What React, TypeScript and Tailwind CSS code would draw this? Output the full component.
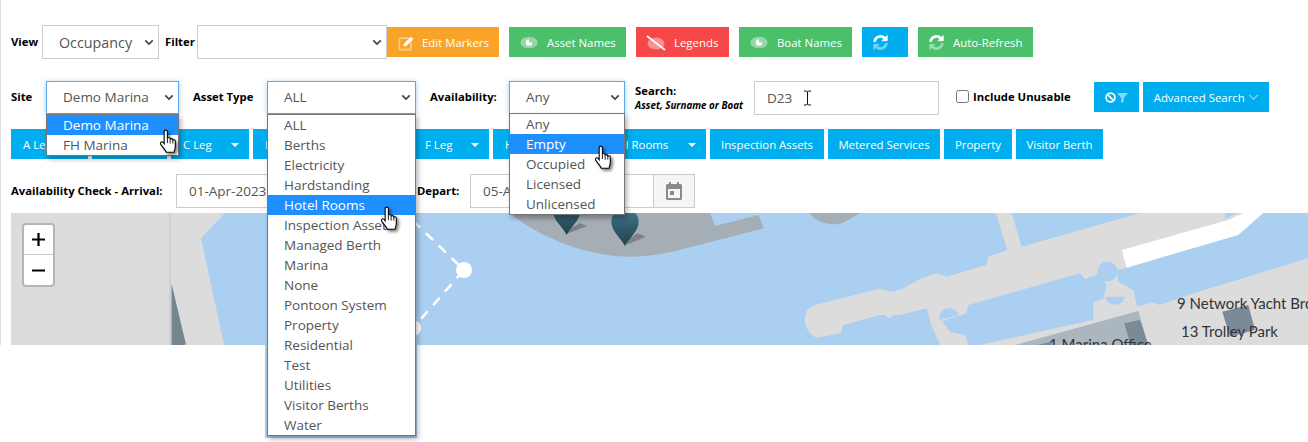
import { ReactNode } from "react";

const FONT = "font-['Open_Sans','Noto_Sans',sans-serif]";

function Chevron() {
  return (
    <svg viewBox="0 0 12 8" className="w-[10px] h-[7px] text-[#444]">
      <path d="M1.5 1.5 6 6l4.5-4.5" fill="none" stroke="currentColor" strokeWidth="2" />
    </svg>
  );
}

function EyeIcon() {
  return (
    <svg viewBox="0 0 20 14" className="w-[18px] h-[13px]">
      <ellipse cx="10" cy="7" rx="9.5" ry="6.5" fill="#fff" opacity="0.4" />
      <path d="M10 3.400a3.600 3.600 0 1 0 3.600 3.600h-2.600a1 1 0 0 1-1-1z" fill="#fff" />
    </svg>
  );
}

function EyeSlashIcon() {
  return (
    <svg viewBox="0 0 20 16" className="w-[20px] h-[16px]">
      <ellipse cx="10" cy="8.5" rx="8.5" ry="6" fill="#fff" opacity="0.4" />
      <path d="M1 1l18 14" stroke="#fff" strokeWidth="1.7" />
    </svg>
  );
}

function EditIcon() {
  return (
    <svg viewBox="0 0 18 17" className="w-[16px] h-[16px]">
      <path d="M12 3H3.500A2 2 0 0 0 1.500 5v9a2 2 0 0 0 2 2h9a2 2 0 0 0 2-2V8" fill="none" stroke="#fff" strokeOpacity="0.45" strokeWidth="2" />
      <path d="M6 12.500l.7-3.400L13.500 2.300a1.400 1.400 0 0 1 2 0l.9.9a1.400 1.400 0 0 1 0 2L9.500 11.800z" fill="#fff" />
    </svg>
  );
}

function SyncIcon() {
  return (
    <svg viewBox="0 0 24 24" className="w-[17px] h-[17px]" fill="none" stroke="#fff" strokeWidth="3.6">
      <path d="M3.500 11a8.500 8.500 0 0 1 14.500-5L21 8.500" />
      <path d="M21.500 2v7.500H14z" fill="#fff" strokeWidth="1" />
      <g opacity="0.45">
        <path d="M20.500 13a8.500 8.500 0 0 1-14.500 5L3 15.500" />
        <path d="M2.500 22v-7.500H10z" fill="#fff" strokeWidth="1" />
      </g>
    </svg>
  );
}

function Hand({ className }: { className: string }) {
  return (
    <svg
      viewBox="0 0 19 24"
      className={`absolute z-30 w-[21px] h-[26px] drop-shadow-[2px_2px_1.5px_rgba(0,0,0,0.5)] ${className}`}
    >
      <path
        d="M5.500 2.500C5.500 1.500 6.200 1 7 1s1.500.5 1.500 1.500V9c0-.8.5-1.200 1.200-1.200S11 8.200 11 9v1c0-.8.500-1.100 1.200-1.100s1.300.4 1.300 1.200v.9c0-.7.500-1 1.100-1s1.200.4 1.200 1.200V16c0 2-.8 3.500-1.300 5.500H7.500C6.500 19.500 4.500 17 2.500 14.500c-.7-.9-.5-2 .3-2.500s1.700 0 2.700 1.500z"
        fill="#fff"
        stroke="#000"
        strokeWidth="1"
      />
      <path d="M8.500 9v4M11 10v3.500M13.500 11v2.500" stroke="#000" strokeWidth="0.8" fill="none" />
    </svg>
  );
}

function Label({ children, className = "" }: { children: ReactNode; className?: string }) {
  return <span className={`text-[11.3px] font-bold text-black whitespace-nowrap ${className}`}>{children}</span>;
}

function SelectBox({ value, active, className }: { value?: string; active?: boolean; className: string }) {
  return (
    <div
      className={`flex items-center justify-between h-full bg-white border pl-[16px] pr-[4px] text-[#555] ${
        active ? "border-[#5aa9ee] shadow-[0_1px_5px_rgba(60,130,200,0.45)]" : "border-[#ccc]"
      } ${className}`}
    >
      <span>{value}</span>
      <Chevron />
    </div>
  );
}

function OptionList({ items, selected, className }: { items: string[]; selected: string; className: string }) {
  return (
    <div className={`absolute z-20 left-0 bg-white border border-[#767676] shadow-[2px_3px_5px_rgba(0,0,0,0.3)] ${className}`}>
      {items.map((item) => (
        <div
          key={item}
          className={`h-[20px] leading-[20px] pl-[16px] text-[13.5px] whitespace-nowrap overflow-hidden ${
            item === selected ? "bg-[#1e8fff] text-white" : "text-[#555]"
          }`}
        >
          {item}
        </div>
      ))}
    </div>
  );
}

function Btn({ children, className }: { children: ReactNode; className: string }) {
  return (
    <button className={`flex items-center h-[30px] pt-[1px] text-white text-[11.4px] whitespace-nowrap ${className}`}>
      {children}
    </button>
  );
}

function MenuBtn({ label, width }: { label: string; width: string }) {
  return (
    <button className={`flex items-center justify-between h-[30px] pt-[1px] bg-[#00aeef] text-white text-[11.4px] pr-[10px] whitespace-nowrap ${width}`}>
      <span>{label}</span>
      <span className="border-x-[4px] border-x-transparent border-t-[4px] border-t-white" />
    </button>
  );
}

function MapDrawing() {
  return (
    <svg viewBox="11 213 1297 132" className="w-full h-full block">
      <defs>
        <linearGradient id="pin" x1="0" y1="0" x2="0" y2="1">
          <stop offset="0" stopColor="#3f7a90" />
          <stop offset="1" stopColor="#22404b" />
        </linearGradient>
      </defs>
      <rect x="11" y="213" width="1297" height="132" fill="#aacff0" />

      {/* west shore */}
      <path d="M11 213H225L201 238 224 345H11z" fill="#dcdcdc" />
      <path d="M170 213V345" stroke="#c9ced3" strokeWidth="1.500" />
      <path d="M171.500 283.500 186 344.500 171.500 347z" fill="#76868f" />

      {/* dashed link between nodes */}
      <path d="M400 208 464 270 413 328" fill="none" stroke="#fff" strokeWidth="2.500" strokeDasharray="10 8" />
      <circle cx="464" cy="270" r="8" fill="#fff" />
      <circle cx="413" cy="328" r="8" fill="#fff" />

      {/* quay with pins, traced in crop coordinates */}
      <g transform="translate(500 170) scale(0.3333)">
        <path
          d="M30 129C120 205 270 262 400 260 470 258 520 245 570 232L792 175 775 135 645 168 630 129z"
          fill="#a5adb5"
        />
        <path d="M928 129C950 160 1000 170 1030 158L1080 129z" fill="#a5adb5" />
        <path
          d="M915 450C915 425 925 410 945 405L1135 357 1180 365 1224 352V415L1165 445 1150 432 1030 465 1022 490 950 503C930 495 915 475 915 450z"
          fill="#dcdcdc"
        />
        <path d="M205 190 262 168 240 160 205 178z" fill="#000" opacity="0.25" />
        <path d="M380 224 437 200 412 190 380 212z" fill="#000" opacity="0.25" />
        <path d="M200 195C190 172 159 152 159 122A41 41 0 1 1 241 122C241 152 210 172 200 195z" fill="url(#pin)" />
        <path d="M375 228C365 205 334 185 334 155A41 41 0 1 1 416 155C416 185 385 205 375 228z" fill="url(#pin)" />
      </g>

      {/* east piers and buildings, traced in crop coordinates */}
      <g transform="translate(900 205) scale(0.3333)">
        <path
          d="M-95 330V282L0 255 65 220 110 205 140 215 258 180 265 155 322 135 288 24H335L365 125 720 24H975V42L1010 24H1040L1000 90 680 188 650 195 655 230 700 255 712 305 580 345V292L610 282 620 240 595 208 555 222 540 205 205 300 200 325 120 350 95 362 80 310 0 330z"
          fill="#dcdcdc"
        />
        <path d="M665 135 985 45 1030 24H1090L1015 90 680 188z" fill="#fff" />
        <circle cx="622" cy="200" r="30" fill="#aacff0" />
        <path d="M616 275A30 30 0 0 0 675 275z" fill="#aacff0" />
        <path d="M118 345A30 30 0 0 1 176 330z" fill="#aacff0" />
        <path d="M95 362 125 345 150 380 195 390 205 420H120z" fill="#dcdcdc" />
        <path d="M240 420 578 345 712 305 755 292 780 300 890 262 1224 160V420z" fill="#dcdcdc" />
        <path d="M345 420 715 318 745 420z" fill="#abb6bf" />
        <path d="M673 355 720 345 745 420H692z" fill="#7a8a96" />
        <path d="M412 420 455 410V420z" fill="#7a8a96" />
        <path d="M967 320 1045 300 1065 375 990 395z" fill="#7a8a96" />
      </g>

      <g fontFamily="Lato, sans-serif" fontSize="15" fill="#333">
        <text x="1177" y="309">9 Network Yacht Broker</text>
        <text x="1181" y="337">13 Trolley Park</text>
        <text x="1049" y="350">1 Marina Office</text>
      </g>
    </svg>
  );
}

const assetTypes = [
  "ALL",
  "Berths",
  "Electricity",
  "Hardstanding",
  "Hotel Rooms",
  "Inspection Assets",
  "Managed Berth",
  "Marina",
  "None",
  "Pontoon System",
  "Property",
  "Residential",
  "Test",
  "Utilities",
  "Visitor Berths",
  "Water",
];

export default function App() {
  return (
    <div className={`w-[1308px] h-[442px] bg-white overflow-hidden ${FONT}`}>
      <div className="h-[345px] border-l border-[#dcdcdc] pl-[10px] pt-[25px]">
        {/* Toolbar */}
        <div className="flex items-start h-[34px]">
          <Label className="leading-[34px] w-[31px]">View</Label>
          <SelectBox value="Occupancy" className="w-[117px] h-[34px] pt-[1px] text-[14.3px]" />
          <Label className="leading-[34px] ml-[6px] w-[32px]">Filter</Label>
          <SelectBox className="w-[190px] h-[34px]" />
          <div className="flex gap-[10px] mt-[2px]">
            <Btn className="w-[112px] bg-[#f9a428] pl-[11px] gap-[8px]">
              <EditIcon />
              Edit Markers
            </Btn>
            <Btn className="w-[117px] bg-[#4cbf6b] pl-[11px] gap-[9px]">
              <EyeIcon />
              Asset Names
            </Btn>
            <Btn className="w-[93px] bg-[#f64848] pl-[10px] gap-[8px]">
              <EyeSlashIcon />
              Legends
            </Btn>
            <Btn className="w-[113px] bg-[#4cbf6b] pl-[11px] gap-[9px]">
              <EyeIcon />
              Boat Names
            </Btn>
            <Btn className="w-[46px] bg-[#00aeef] pl-[10px]">
              <SyncIcon />
            </Btn>
            <Btn className="w-[115px] bg-[#4cbf6b] pl-[10px] gap-[8px]">
              <SyncIcon />
              Auto-Refresh
            </Btn>
          </div>
        </div>

        {/* Search row */}
        <div className="flex items-start h-[34px] mt-[22px]">
          <Label className="leading-[32px] w-[35px]">Site</Label>
          <div className="relative w-[133px] h-[33px]">
            <SelectBox value="Demo Marina" active className="w-full text-[13.5px]" />
            <OptionList items={["Demo Marina", "FH Marina"]} selected="Demo Marina" className="top-[33px] w-[133px]" />
            <Hand className="left-[112px] top-[48px]" />
          </div>
          <Label className="leading-[32px] ml-[14px] w-[74px]">Asset Type</Label>
          <div className="relative w-[149px] h-[33px]">
            <SelectBox value="ALL" active className="w-full text-[13.5px]" />
            <div className="absolute z-10 left-[-2px] top-[264px] w-[152px] h-[93px] bg-[#aacff0]" />
            <OptionList items={assetTypes} selected="Hotel Rooms" className="top-[33px] w-[149px]" />
            <Hand className="left-[112px] top-[125px]" />
          </div>
          <Label className="leading-[32px] ml-[14px] w-[79px]">Availability:</Label>
          <div className="relative w-[116px] h-[33px]">
            <SelectBox value="Any" active className="w-full text-[13.5px]" />
            <OptionList
              items={["Any", "Empty", "Occupied", "Licensed", "Unlicensed"]}
              selected="Empty"
              className="top-[32px] w-[116px]"
            />
            <Hand className="left-[84px] top-[64px]" />
          </div>
          <div className="ml-[10px] w-[119px] flex flex-col">
            <Label className="leading-[16px] mt-[2px]">Search:</Label>
            <span className="text-[9.8px] font-bold italic text-black leading-[14px] whitespace-nowrap">Asset, Surname or Boat</span>
          </div>
          <div className="relative w-[185px] h-[34px]">
            <input
              readOnly
              value="D23"
              className="w-full h-full border border-[#ccc] pl-[12px] text-[13.5px] text-[#555] outline-none"
            />
            <svg viewBox="0 0 9 16" className="absolute left-[49px] top-[9px] w-[9px] h-[16px]">
              <path d="M1 1h2.500L4.500 2 5.500 1H8M4.500 2v12M1 15h2.500l1-1 1 1H8" fill="none" stroke="#111" strokeWidth="1" />
            </svg>
          </div>
          <label className="flex items-center ml-[17px] mt-[8px] gap-[4px]">
            <input type="checkbox" readOnly className="w-[13px] h-[13px] m-0 mb-[2px]" />
            <Label>Include Unusable</Label>
          </label>
          <Btn className="w-[45px] bg-[#00aeef] ml-[23px] mt-[1px] pl-[11px] gap-[1px]">
            <svg viewBox="0 0 12 12" className="w-[11px] h-[11px]">
              <circle cx="6" cy="6" r="4.800" fill="none" stroke="#fff" strokeWidth="1.800" />
              <path d="M2.500 2.500l7 7" stroke="#fff" strokeWidth="1.800" />
            </svg>
            <svg viewBox="0 0 12 12" className="w-[11px] h-[11px]">
              <path d="M0 1h12L7.500 6.500V11L4.500 12V6.500z" fill="#fff" opacity="0.5" />
            </svg>
          </Btn>
          <Btn className="w-[126px] bg-[#00aeef] ml-[4px] mt-[1px] pl-[11px] gap-[3px]">
            Advanced Search
            <svg viewBox="0 0 12 8" className="w-[11px] h-[7px]">
              <path d="M1 1l5 5 5-5" fill="none" stroke="#fff" strokeOpacity="0.5" strokeWidth="1.500" />
            </svg>
          </Btn>
        </div>

        {/* Asset group buttons */}
        <div className="flex gap-[4px] mt-[14px]">
          <MenuBtn label="A Leg" width="w-[77px] pl-[12px]" />
          <MenuBtn label="B Leg" width="w-[75px] pl-[12px]" />
          <MenuBtn label="C Leg" width="w-[78px] pl-[12px]" />
          <MenuBtn label="D Leg" width="w-[77px] pl-[12px]" />
          <MenuBtn label="E Leg" width="w-[75px] pl-[12px]" />
          <MenuBtn label="F Leg" width="w-[76px] pl-[12px]" />
          <Btn className="w-[85px] bg-[#00aeef] pl-[12px]">Hardstanding</Btn>
          <div className="flex w-[124px]">
            <MenuBtn label="Hotel Rooms" width="w-full pl-[18px]" />
          </div>
          <Btn className="w-[114px] bg-[#00aeef] justify-center">Inspection Assets</Btn>
          <Btn className="w-[112px] bg-[#00aeef] justify-center">Metered Services</Btn>
          <Btn className="w-[68px] bg-[#00aeef] justify-center">Property</Btn>
          <Btn className="w-[87px] bg-[#00aeef] justify-center">Visitor Berth</Btn>
        </div>

        {/* Availability dates */}
        <div className="flex items-center h-[34px] mt-[15px]">
          <Label className="w-[165px]">Availability Check - Arrival:</Label>
          <input
            readOnly
            value="01-Apr-2023"
            className="w-[235px] h-full border border-[#ccc] pl-[12px] text-[13.5px] text-[#555] outline-none"
          />
          <Label className="ml-[6px] w-[53px]">Depart:</Label>
          <input
            readOnly
            value="05-Apr-2023"
            className="w-[184px] h-full border border-[#ccc] pl-[12px] text-[13.5px] text-[#555] outline-none"
          />
          <div className="flex items-center justify-center w-[41px] h-full bg-[#f5f5f5] border border-l-0 border-[#ccc]">
            <svg viewBox="0 0 18 20" className="w-[18px] h-[20px]">
              <path d="M4 1h2v2h6V1h2v2h1.500A1.500 1.500 0 0 1 17 4.500v13a1.500 1.500 0 0 1-1.500 1.500h-13A1.500 1.500 0 0 1 1 17.500v-13A1.500 1.500 0 0 1 2.500 3H4zM3 8v9h12V8zM5 10h4v4H5z" fill="#8a8a8a" fillRule="evenodd" />
            </svg>
          </div>
        </div>

        {/* Map */}
        <div className="relative h-[132px] mt-[5px] overflow-hidden">
          <MapDrawing />
          <div className="absolute left-[11px] top-[10px] w-[33px] border-2 border-[#b5b5b5] rounded-[4px] overflow-hidden bg-white">
            <div className="h-[30px] flex items-center justify-center border-b border-[#ccc]">
              <svg viewBox="0 0 14 14" className="w-[13px] h-[13px]">
                <path d="M7 0v14M0 7h14" stroke="#000" strokeWidth="2.400" />
              </svg>
            </div>
            <div className="h-[30px] flex items-center justify-center">
              <svg viewBox="0 0 14 14" className="w-[13px] h-[13px]">
                <path d="M0 7h14" stroke="#000" strokeWidth="2.400" />
              </svg>
            </div>
          </div>
        </div>
      </div>
    </div>
  );
}
